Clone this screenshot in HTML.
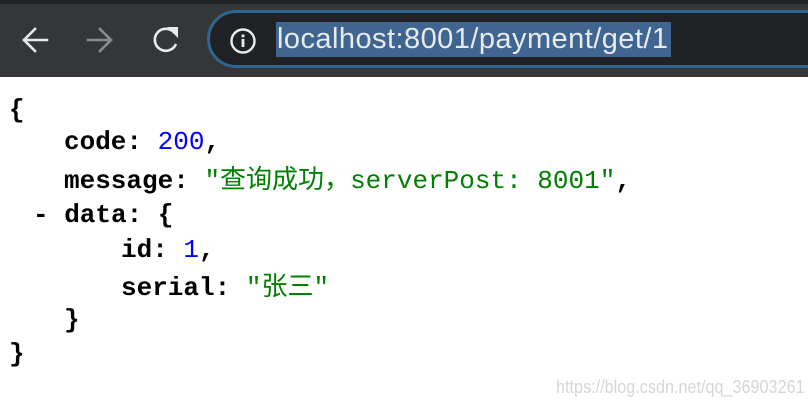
<!DOCTYPE html>
<html><head><meta charset="utf-8"><style>
*{margin:0;padding:0}
body{width:808px;height:410px;overflow:hidden;background:#fff;position:relative;font-family:"Liberation Mono","Noto Sans CJK SC",monospace}
#top{position:absolute;left:0;top:0;width:808px;height:4px;background:#202124}
#bar{position:absolute;left:0;top:4px;width:808px;height:73px;background:#35363a}
#omni{position:absolute;left:207px;top:10px;width:640px;height:52px;border:3px solid #2b6591;border-radius:30px;background:#202124}
#url{position:absolute;left:276px;top:22px;height:35px;width:394px;background:#3f6590;color:#e8eaed;font:29px/35px "Liberation Sans",sans-serif;padding-left:1px;letter-spacing:0.45px;white-space:nowrap}
.l{position:absolute;font-size:26px;font-weight:bold;color:#000;white-space:pre;line-height:30px}
.n{color:#0000ff;font-weight:normal}
.s{color:#008000;font-weight:normal}
.c{font-family:"Noto Sans CJK SC",sans-serif;font-weight:normal}
#wm{position:absolute;left:556px;top:377px;font:18px "Liberation Sans",sans-serif;color:#d6d6d6;transform:scaleX(0.9);transform-origin:left;white-space:nowrap}
</style></head><body>
<div id="top"></div><div id="bar"></div>
<svg style="position:absolute;left:0;top:0" width="210" height="80">
<g fill="none" stroke="#e8eaed" stroke-width="2.6" stroke-linecap="square">
<path d="M24 40H47M35 29L24 40L35 51"/>
</g>
<g fill="none" stroke="#8a8b8d" stroke-width="2.6" stroke-linecap="square">
<path d="M88 40H111M100 29L111 40L100 51"/>
</g>
<path d="M174.5 33A11 11 0 1 0 176 44" fill="none" stroke="#e8eaed" stroke-width="2.6"/>
<path d="M167 27L178 27L178 38Z" fill="#e8eaed"/>
</svg>
<div id="omni"></div>
<svg style="position:absolute;left:228px;top:26px" width="30" height="30">
<circle cx="15" cy="15" r="11.5" fill="none" stroke="#e8eaed" stroke-width="2.4"/>
<rect x="13.6" y="13" width="2.8" height="8" fill="#e8eaed"/><rect x="13.6" y="8.5" width="2.8" height="2.8" fill="#e8eaed"/>
</svg>
<div id="url">localhost:8001/payment/get/1</div>
<div class="l" style="left:9px;top:95px">{</div>
<div class="l" style="left:64px;top:127px">code: <span class="n">200</span>,</div>
<div class="l" style="left:64px;top:163px">message: <span class="s">"<span class="c">查询成功，</span>serverPost: 8001"</span>,</div>
<div class="l" style="left:33px;top:200px">- data: {</div>
<div class="l" style="left:121px;top:235px">id: <span class="n">1</span>,</div>
<div class="l" style="left:121px;top:270px">serial: <span class="s">"<span class="c">张三</span>"</span></div>
<div class="l" style="left:64px;top:305px">}</div>
<div class="l" style="left:9px;top:339px">}</div>
<div id="wm">https://blog.csdn.net/qq_36903261</div>
</body></html>
